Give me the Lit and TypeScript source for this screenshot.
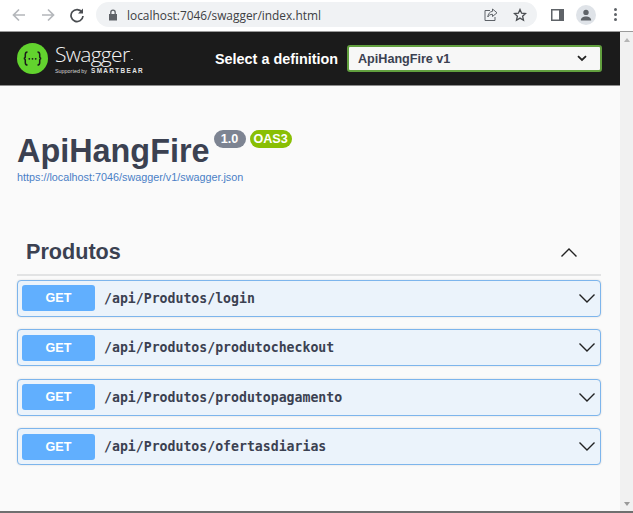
import { LitElement, html, css, svg } from "lit";
import { customElement } from "lit/decorators.js";

const paths = ["login", "produtocheckout", "produtopagamento", "ofertasdiarias"];

@customElement("app-root")
export class AppRoot extends LitElement {
  static styles = css`
    :host { display: block; width: 633px; height: 513px; overflow: hidden; font-family: "Liberation Sans", Arial, sans-serif; background: #fafafa; }
    .chrome { height: 31px; background: #fff; display: flex; align-items: center; border-bottom: 1px solid #9a9a9a; box-sizing: content-box; }
    .nav { width: 16px; height: 16px; display: block; }
    .navs { display: flex; align-items: center; gap: 13px; padding-left: 11px; width: 96px; box-sizing: border-box; margin-top: -2px; }
    .omni { width: 441px; height: 25px; margin-top: -2px; border-radius: 13px; background: #f0f2f4; display: flex; align-items: center; box-sizing: border-box; padding-left: 12px; color: #3d4043; }
    .omni .url { margin-left: 9px; font-family: "Open Sans", "Noto Sans", sans-serif; font-size: 11.9px; }
    .omni .spacer { flex: 1; }
    .omni svg { display: block; }
    .omni .share { margin-right: 15px; }
    .omni .star { margin-right: 10px; }
    .right { display: flex; align-items: center; flex: 1; margin-top: -2px; }
    .panel { margin-left: 14px; }
    .avatar { margin-left: 12px; width: 20px; height: 20px; border-radius: 50%; background: #dfe3e8; display: flex; align-items: center; justify-content: center; overflow: hidden; }
    .dots { margin-left: 18px; display: flex; flex-direction: column; gap: 2px; }
    .dots i { width: 3px; height: 3px; border-radius: 50%; background: #5f6368; display: block; }

    .body { display: grid; grid-template-columns: 620px 13px; height: 479px; }
    .strip { height: 2px; background: #6f6f6f; }
    .main { min-width: 0; }
    .scroll { background: #f1f1f1; display: flex; flex-direction: column; justify-content: space-between; align-items: center; padding: 6px 0 5px; box-sizing: border-box; }
    .scroll i { display: block; width: 0; height: 0; border-left: 3.5px solid transparent; border-right: 3.5px solid transparent; }
    .scroll .up { border-bottom: 4px solid #b5b5b5; }
    .scroll .down { border-top: 4px solid #9a9a9a; }

    .topbar { height: 53px; background: #1b1b1b; border-bottom: 1px solid #8d8d8d; display: flex; align-items: center; padding-left: 17px; box-sizing: content-box; }
    .logo { display: flex; align-items: center; gap: 7px; width: 198px; }
    .brand { display: flex; flex-direction: column; color: #fff; }
    .name-row { display: flex; align-items: flex-end; }
    .brand .name { font-family: "Open Sans", "Noto Sans", sans-serif; font-size: 21px; line-height: 24px; letter-spacing: -0.7px; font-weight: 300; color: #f4f4f4; }
    .brand .dot { display: block; width: 2px; height: 1px; background: #999; margin: 0 0 6px 2px; }
    .brand .sub { display: flex; align-items: center; gap: 4px; font-size: 5.4px; line-height: 8px; color: #d5d5d5; margin-top: 1px; white-space: nowrap; }
    .brand .sub b { font-size: 6.4px; letter-spacing: 1.35px; font-weight: 700; color: #e4e4e4; }
    .label { color: #fff; font-size: 14.4px; font-weight: 700; width: 132px; white-space: nowrap; }
    .select { width: 255px; height: 27px; box-sizing: border-box; border: 2px solid #62a03f; border-radius: 3px; background: #f7f7f7; display: flex; align-items: center; justify-content: space-between; padding: 0 13px 0 9px; color: #3b4151; font-size: 12.6px; font-weight: 700; }
    .select svg { display: block; }

    .content { padding: 0 19px 0 17px; }
    .title-row { display: flex; align-items: flex-start; margin-top: 42px; height: 44px; }
    h1 { margin: 1px 0 0; font-size: 32.4px; line-height: 44px; font-weight: 700; color: #3b4151; }
    .badge { margin-top: 2px; height: 18px; border-radius: 9px; color: #fff; font-size: 12.6px; font-weight: 700; line-height: 18px; text-align: center; box-sizing: border-box; }
    .v { margin-left: 4px; width: 32px; background: #7d8492; }
    .oas { margin-left: 4px; width: 42px; background: #89bf04; }
    .link { display: block; font-size: 10.8px; line-height: 14px; margin-top: -2px; color: #4a7fc6; }
    .section { margin-top: 43px; height: 49px; border-bottom: 2px solid #e2e3e4; display: flex; align-items: center; justify-content: space-between; padding: 3px 24px 0 9px; box-sizing: border-box; }
    h2 { margin: 0; font-size: 21.6px; font-weight: 700; color: #3b4151; }
    .ops { display: flex; flex-direction: column; gap: 12.5px; margin-top: 3.5px; }
    .op { height: 37px; box-sizing: border-box; border: 1px solid #7db5ec; border-radius: 4px; background: #ebf3fb; display: flex; align-items: center; padding: 0 5px 0 4px; box-shadow: 0 0 2px rgba(0,0,0,.15); }
    .method { width: 73px; height: 26px; background: #61affe; border-radius: 3px; color: #fff; font-size: 12.6px; font-weight: 700; display: flex; align-items: center; justify-content: center; }
    .path { margin-left: 9px; flex: 1; font-family: "DejaVu Sans Mono", monospace; font-size: 13.2px; font-weight: 700; color: #3b4151; }
    .op svg { display: block; }
  `;

  private chev(w: number, h: number, d: string) {
    return html`<svg width=${w} height=${h} viewBox="0 0 ${w} ${h}" fill="none" stroke="#222" stroke-width="1.4">${svg`<path d=${d}></path>`}</svg>`;
  }

  render() {
    return html`
      <div class="chrome">
        <div class="navs">
          <svg class="nav" viewBox="0 0 16 16" fill="none" stroke="#b4b7bb" stroke-width="1.7"><path d="M14 8H2.5M8 2.5 2.5 8 8 13.5"/></svg>
          <svg class="nav" viewBox="0 0 16 16" fill="none" stroke="#b4b7bb" stroke-width="1.7"><path d="M2 8h11.5M8 2.5 13.5 8 8 13.5"/></svg>
          <svg class="nav" viewBox="0 0 16 16" fill="none" stroke="#4a4d51" stroke-width="1.7"><path d="M13 5.2A6 6 0 1 0 14 9"/><path d="M14 1.6v5h-5z" fill="#4a4d51" stroke="none"/></svg>
        </div>
        <div class="omni">
          <svg width="10" height="12" viewBox="0 0 10 12"><path d="M1 5h8v6.5H1z" fill="#5f6368"/><path d="M2.8 5V3.4a2.2 2.2 0 0 1 4.4 0V5" fill="none" stroke="#5f6368" stroke-width="1.3"/></svg>
          <span class="url">localhost:7046/swagger/index.html</span>
          <span class="spacer"></span>
          <svg class="share" width="14" height="14" viewBox="0 0 14 14" fill="none" stroke="#5f6368" stroke-width="1"><path d="M6 2.5H1v10h10V9"/><path d="M8.5 1 13 4.8 8.5 8.5V6.3C6.3 6.3 4.8 7.2 3.8 9 4 6 5.8 3.6 8.5 3.3z"/></svg>
          <svg class="star" width="14" height="14" viewBox="0 0 14 14" fill="none" stroke="#4a4d51" stroke-width="1.3"><path d="M7 1.5 8.6 5.2l4 .3-3 2.7.9 4L7 10.1l-3.5 2.1.9-4-3-2.7 4-.3z"/></svg>
        </div>
        <div class="right">
          <svg class="panel" width="13" height="12" viewBox="0 0 13 12"><rect x=".75" y=".75" width="11.5" height="10.5" fill="#fff" stroke="#5f6368" stroke-width="1.5"/><rect x="8" y="1" width="4.5" height="10" fill="#5f6368"/></svg>
          <div class="avatar"><svg width="12" height="12" viewBox="0 0 12 12" fill="#5f6368"><circle cx="6" cy="3.4" r="2.7"/><path d="M.8 11.5c0-2.8 2.4-4 5.2-4s5.2 1.2 5.2 4z"/></svg></div>
          <div class="dots"><i></i><i></i><i></i></div>
        </div>
      </div>
      <div class="body">
        <div class="main">
          <div class="topbar">
            <div class="logo">
              <svg width="31" height="31" viewBox="0 0 31 31">
                <circle cx="15.5" cy="15.5" r="15.5" fill="#62d32e"/>
                <path d="M10.5 9c-2 0-2.2 1-2.2 2.6v2c0 1.2-.7 1.9-1.6 1.9.9 0 1.6.7 1.6 1.9v2c0 1.6.2 2.6 2.2 2.6M20.5 9c2 0 2.2 1 2.2 2.6v2c0 1.2.7 1.9 1.6 1.9-.9 0-1.6.7-1.6 1.9v2c0 1.6-.2 2.6-2.2 2.6" fill="none" stroke="#1b1b1b" stroke-width="1.5"/>
                <circle cx="12.3" cy="15.8" r=".9" fill="#1b1b1b"/><circle cx="15.5" cy="15.8" r=".9" fill="#1b1b1b"/><circle cx="18.7" cy="15.8" r=".9" fill="#1b1b1b"/>
              </svg>
              <div class="brand">
                <div class="name-row"><span class="name">Swagger</span><i class="dot"></i></div>
                <span class="sub">Supported by <b>SMARTBEAR</b></span>
              </div>
            </div>
            <span class="label">Select a definition</span>
            <div class="select">
              <span>ApiHangFire v1</span>
              <svg width="10" height="7" viewBox="0 0 10 7" fill="none" stroke="#222" stroke-width="1.8"><path d="M1 1.2 5 5l4-3.8"/></svg>
            </div>
          </div>
          <div class="content">
            <div class="title-row">
              <h1>ApiHangFire</h1>
              <span class="badge v">1.0</span>
              <span class="badge oas">OAS3</span>
            </div>
            <a class="link">https://localhost:7046/swagger/v1/swagger.json</a>
            <div class="section">
              <h2>Produtos</h2>
              ${this.chev(16, 9, "M.5 8.5 8 1l7.5 7.5")}
            </div>
            <div class="ops">
              ${paths.map((p) => html`
                <div class="op">
                  <span class="method">GET</span>
                  <span class="path">/api/Produtos/${p}</span>
                  ${this.chev(16, 9, "M.5.5 8 8l7.5-7.5")}
                </div>`)}
            </div>
          </div>
        </div>
        <div class="scroll"><i class="up"></i><i class="down"></i></div>
      </div>
      <div class="strip"></div>
    `;
  }
}
